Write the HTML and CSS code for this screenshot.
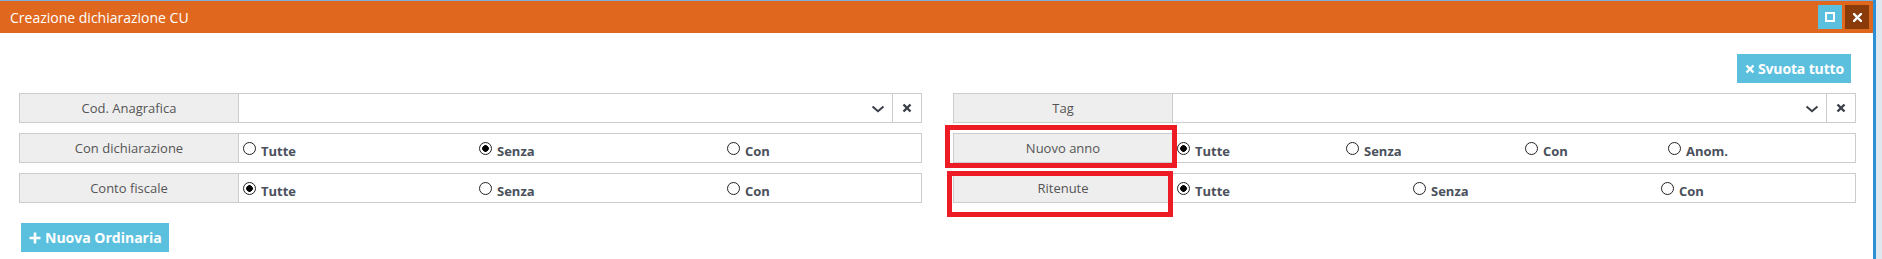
FILE: index.html
```html
<!DOCTYPE html>
<html lang="it">
<head>
<meta charset="utf-8">
<title>Creazione dichiarazione CU</title>
<link rel="stylesheet" href="styles.css">
</head>
<body>
<div class="page">
  <div class="dialog">
    <div class="titlebar">
      <span class="title">Creazione dichiarazione CU</span>
      <div class="tb-btns">
        <button class="tb-btn tb-max"><span class="sq"></span></button>
        <button class="tb-btn tb-close">
          <svg width="9" height="9" viewBox="0 0 9 9"><path d="M1 1L8 8M8 1L1 8" stroke="#fff" stroke-width="2.4" stroke-linecap="square"/></svg>
        </button>
      </div>
    </div>
    <div class="body">
      <div class="toolbar">
        <button class="btn btn-info btn-clear">
          <svg class="ico" width="10" height="10" viewBox="0 0 10 10"><path d="M1.5 1.5L8.5 8.5M8.5 1.5L1.5 8.5" stroke="#fff" stroke-width="2.4"/></svg>
          <span>Svuota tutto</span>
        </button>
      </div>
      <div class="filters">
        <div class="col">
          <div class="frow">
            <div class="lbl">Cod. Anagrafica</div>
            <div class="field select">
              <div class="sel-value"></div>
              <div class="sel-arrow"><svg width="14" height="8" viewBox="0 0 14 8"><path d="M1.5 1.5L7 6.2L12.5 1.5" fill="none" stroke="#3a3f48" stroke-width="2"/></svg></div>
              <div class="sel-clear"><svg width="10" height="10" viewBox="0 0 10 10"><path d="M1.5 1.5L8.5 8.5M8.5 1.5L1.5 8.5" stroke="#3a3f48" stroke-width="2.4"/></svg></div>
            </div>
          </div>
          <div class="frow">
            <div class="lbl">Con dichiarazione</div>
            <div class="field opts opts-3">
              <label class="opt"><span class="radio"></span><span class="otext">Tutte</span></label>
              <label class="opt"><span class="radio on"></span><span class="otext">Senza</span></label>
              <label class="opt"><span class="radio"></span><span class="otext">Con</span></label>
            </div>
          </div>
          <div class="frow">
            <div class="lbl">Conto fiscale</div>
            <div class="field opts opts-3">
              <label class="opt"><span class="radio on"></span><span class="otext">Tutte</span></label>
              <label class="opt"><span class="radio"></span><span class="otext">Senza</span></label>
              <label class="opt"><span class="radio"></span><span class="otext">Con</span></label>
            </div>
          </div>
        </div>
        <div class="col">
          <div class="frow">
            <div class="lbl">Tag</div>
            <div class="field select">
              <div class="sel-value"></div>
              <div class="sel-arrow"><svg width="14" height="8" viewBox="0 0 14 8"><path d="M1.5 1.5L7 6.2L12.5 1.5" fill="none" stroke="#3a3f48" stroke-width="2"/></svg></div>
              <div class="sel-clear"><svg width="10" height="10" viewBox="0 0 10 10"><path d="M1.5 1.5L8.5 8.5M8.5 1.5L1.5 8.5" stroke="#3a3f48" stroke-width="2.4"/></svg></div>
            </div>
          </div>
          <div class="frow">
            <div class="lbl">Nuovo anno</div>
            <div class="field opts opts-4">
              <label class="opt"><span class="radio on"></span><span class="otext">Tutte</span></label>
              <label class="opt"><span class="radio"></span><span class="otext">Senza</span></label>
              <label class="opt"><span class="radio"></span><span class="otext">Con</span></label>
              <label class="opt"><span class="radio"></span><span class="otext">Anom.</span></label>
            </div>
            <div class="mark mark-1"></div>
          </div>
          <div class="frow">
            <div class="lbl">Ritenute</div>
            <div class="field opts opts-3">
              <label class="opt"><span class="radio on"></span><span class="otext">Tutte</span></label>
              <label class="opt"><span class="radio"></span><span class="otext">Senza</span></label>
              <label class="opt"><span class="radio"></span><span class="otext">Con</span></label>
            </div>
            <div class="mark mark-2"></div>
          </div>
        </div>
      </div>
      <div class="footer">
        <button class="btn btn-info btn-new">
          <svg class="ico" width="12" height="12" viewBox="0 0 12 12"><path d="M6 0.5V11.5M0.5 6H11.5" stroke="#fff" stroke-width="2.6"/></svg>
          <span>Nuova Ordinaria</span>
        </button>
      </div>
    </div>
  </div>
  <div class="edge"></div>
</div>
</body>
</html>
```

FILE: styles.css
```css
html, body {
  margin: 0;
  padding: 0;
  background: #fff;
}

body {
  font-family: "Open Sans", "Noto Sans", sans-serif;
  width: 1882px;
  height: 259px;
  overflow: hidden;
}

.page {
  display: flex;
  height: 259px;
}

.dialog {
  width: 1876px;
  border-top: 1px solid #7fb0d8;
  background: #fff;
}

.titlebar {
  height: 32px;
  background: #e0681e;
  display: flex;
  align-items: center;
  justify-content: space-between;
  padding-left: 10px;
}

.title {
  color: #fff;
  font-size: 14px;
  line-height: 19px;
}

.tb-btns {
  display: flex;
  gap: 3px;
  padding-right: 4px;
  align-self: flex-start;
  padding-top: 4px;
}

.tb-btn {
  width: 24px;
  height: 24px;
  border: 0;
  padding: 0;
  display: flex;
  align-items: center;
  justify-content: center;
}

.tb-max {
  background: #5bc0de;
}

.tb-max .sq {
  width: 10px;
  height: 10px;
  box-sizing: border-box;
  border: 2px solid #fff;
}

.tb-close {
  background: #8b3a0a;
}

.body {
  display: flex;
  flex-direction: column;
}

.toolbar {
  display: flex;
  justify-content: flex-end;
  padding-right: 22px;
  margin-top: 21px;
}

.btn {
  height: 29px;
  border: 0;
  display: inline-flex;
  align-items: center;
  color: #fff;
  font-family: "Open Sans", "Noto Sans", sans-serif;
  font-weight: 700;
  font-size: 14px;
}

.btn-info {
  background: #5bc0de;
}

.btn-clear {
  gap: 3px;
  padding: 0 7px 0 8px;
  letter-spacing: -0.15px;
}

.btn-new {
  gap: 4px;
  padding: 0 7px 0 8px;
}

.filters {
  display: flex;
  gap: 31px;
  padding-left: 19px;
  margin-top: 10px;
}

.col {
  width: 903px;
  display: flex;
  flex-direction: column;
  gap: 10px;
}

.frow {
  position: relative;
  display: flex;
  height: 30px;
}

.lbl {
  width: 220px;
  flex: none;
  box-sizing: border-box;
  border: 1px solid #ccc;
  background: #eee;
  color: #555;
  font-size: 13px;
  display: flex;
  align-items: center;
  justify-content: center;
}

.field {
  flex: 1;
  box-sizing: border-box;
  border: 1px solid #ccc;
  border-left: 0;
  background: #fff;
}

.select {
  display: flex;
}

.sel-value {
  flex: 1;
}

.sel-arrow {
  width: 28px;
  display: flex;
  align-items: center;
  justify-content: center;
  padding-top: 1px;
}

.sel-clear {
  width: 28px;
  border-left: 1px solid #ccc;
  display: flex;
  align-items: center;
  justify-content: center;
}

.opts {
  display: grid;
  align-items: center;
  padding-left: 4px;
}

.opts-3 {
  grid-template-columns: 236px 248px 1fr;
}

.opts-4 {
  grid-template-columns: 169px 179px 143px 1fr;
}

.opt {
  display: flex;
  align-items: center;
  gap: 5px;
}

.radio {
  width: 13px;
  height: 13px;
  flex: none;
  box-sizing: border-box;
  border: 1.4px solid #222;
  border-radius: 50%;
  background: #fff;
  margin-top: 1px;
}

.radio.on {
  background: radial-gradient(circle, #000 0 3px, #fff 3.6px);
}

.otext {
  font-size: 13px;
  font-weight: 700;
  color: #4a505c;
  padding-top: 6px;
}

.mark {
  position: absolute;
  box-sizing: border-box;
  border: 5px solid #ed1c24;
  pointer-events: none;
}

.mark-1 {
  left: -8px;
  top: -8px;
  width: 232px;
  height: 43px;
}

.mark-2 {
  left: -6px;
  top: -2px;
  width: 226px;
  height: 46px;
}

.footer {
  padding-left: 21px;
  margin-top: 20px;
}

.edge {
  width: 6px;
  border-left: 3px solid #2d8fd5;
  background: #dfe7ef;
}
```
